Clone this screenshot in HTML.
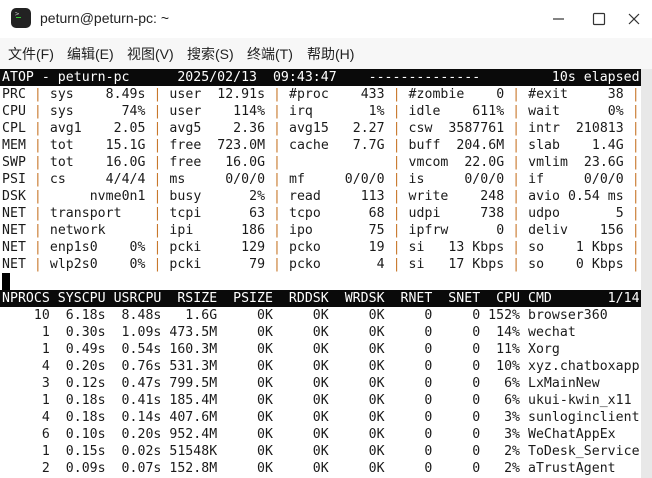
<!DOCTYPE html>
<html><head><meta charset="utf-8"><style>
html,body{margin:0;padding:0;width:652px;height:478px;overflow:hidden;background:#fff;}
.win{position:absolute;left:0;top:0;width:652px;height:478px;background:#fff;border-radius:8px 8px 0 0;overflow:hidden}
.title{position:absolute;left:0;top:0;width:652px;height:38px;background:#fff}
.icon{position:absolute;left:11px;top:8px;width:20px;height:20px;background:#222;border-radius:5px}
.icon:after{content:"";position:absolute;left:5px;top:9px;width:5px;height:1px;background:#3c3}
.icon:before{content:">";position:absolute;left:4px;top:2px;font:7px "DejaVu Sans Mono",monospace;color:#ccc}
.ttext{position:absolute;left:40px;top:10px;font:14px "Liberation Sans","Noto Sans CJK SC",sans-serif;color:#222}
.menu{position:absolute;left:0;top:38px;width:652px;height:31px;background:#f7f7f7;font:14px "Liberation Sans","Noto Sans CJK SC",sans-serif;color:#222}
.menu span{position:absolute;top:6px}
.term{position:absolute;left:0;top:69px;width:641px;height:409px;background:#fff}
.sb{position:absolute;left:641px;top:69px;width:11px;height:409px;background:#e8e8e8}
pre{position:absolute;left:2px;top:69px;margin:0;font:13.2px/17px "DejaVu Sans Mono",monospace;letter-spacing:0.03px;color:#1a1a1a;white-space:pre}
.b{position:absolute;left:0;width:641px;height:17px;background:#0a0a0a}
.i{color:#fff}
.o{color:#c8782c}
.cur{position:absolute;left:2px;top:273px;width:8px;height:17px;background:#000}
</style></head><body><div class="win">
<div class="title"><div class="icon"></div><div class="ttext">peturn@peturn-pc: ~</div>
<svg style="position:absolute;left:552px;top:12px" width="90" height="14"><line x1="1" y1="7" x2="12" y2="7" stroke="#333" stroke-width="1.2"/><rect x="41.5" y="1.5" width="11" height="11" fill="none" stroke="#333" stroke-width="1.2" rx="1"/><path d="M77 2L87 12M87 2L77 12" stroke="#333" stroke-width="1.2"/></svg></div>
<div class="menu"><span style="left:8px">文件(F)</span><span style="left:67px">编辑(E)</span><span style="left:127px">视图(V)</span><span style="left:187px">搜索(S)</span><span style="left:247px">终端(T)</span><span style="left:307px">帮助(H)</span></div>
<div class="term"></div><div class="sb"></div>
<div class="b" style="top:69px"></div><div class="b" style="top:290px"></div>
<div class="cur"></div>
<pre><span class="i">ATOP - peturn-pc      2025/02/13  09:43:47    --------------         10s elapsed</span>
PRC <span class="o">|</span> sys    8.49s <span class="o">|</span> user  12.91s <span class="o">|</span> #proc    433 <span class="o">|</span> #zombie    0 <span class="o">|</span> #exit     38 <span class="o">|</span>
CPU <span class="o">|</span> sys      74% <span class="o">|</span> user    114% <span class="o">|</span> irq       1% <span class="o">|</span> idle    611% <span class="o">|</span> wait      0% <span class="o">|</span>
CPL <span class="o">|</span> avg1    2.05 <span class="o">|</span> avg5    2.36 <span class="o">|</span> avg15   2.27 <span class="o">|</span> csw  3587761 <span class="o">|</span> intr  210813 <span class="o">|</span>
MEM <span class="o">|</span> tot    15.1G <span class="o">|</span> free  723.0M <span class="o">|</span> cache   7.7G <span class="o">|</span> buff  204.6M <span class="o">|</span> slab    1.4G <span class="o">|</span>
SWP <span class="o">|</span> tot    16.0G <span class="o">|</span> free   16.0G <span class="o">|</span>              <span class="o">|</span> vmcom  22.0G <span class="o">|</span> vmlim  23.6G <span class="o">|</span>
PSI <span class="o">|</span> cs     4/4/4 <span class="o">|</span> ms     0/0/0 <span class="o">|</span> mf     0/0/0 <span class="o">|</span> is     0/0/0 <span class="o">|</span> if     0/0/0 <span class="o">|</span>
DSK <span class="o">|</span>      nvme0n1 <span class="o">|</span> busy      2% <span class="o">|</span> read     113 <span class="o">|</span> write    248 <span class="o">|</span> avio 0.54 ms <span class="o">|</span>
NET <span class="o">|</span> transport    <span class="o">|</span> tcpi      63 <span class="o">|</span> tcpo      68 <span class="o">|</span> udpi     738 <span class="o">|</span> udpo       5 <span class="o">|</span>
NET <span class="o">|</span> network      <span class="o">|</span> ipi      186 <span class="o">|</span> ipo       75 <span class="o">|</span> ipfrw      0 <span class="o">|</span> deliv    156 <span class="o">|</span>
NET <span class="o">|</span> enp1s0    0% <span class="o">|</span> pcki     129 <span class="o">|</span> pcko      19 <span class="o">|</span> si   13 Kbps <span class="o">|</span> so    1 Kbps <span class="o">|</span>
NET <span class="o">|</span> wlp2s0    0% <span class="o">|</span> pcki      79 <span class="o">|</span> pcko       4 <span class="o">|</span> si   17 Kbps <span class="o">|</span> so    0 Kbps <span class="o">|</span>

<span class="i">NPROCS SYSCPU USRCPU  RSIZE  PSIZE  RDDSK  WRDSK  RNET  SNET  CPU CMD       1/14</span>
    10  6.18s  8.48s   1.6G     0K     0K     0K     0     0 152% browser360
     1  0.30s  1.09s 473.5M     0K     0K     0K     0     0  14% wechat
     1  0.49s  0.54s 160.3M     0K     0K     0K     0     0  11% Xorg
     4  0.20s  0.76s 531.3M     0K     0K     0K     0     0  10% xyz.chatboxapp
     3  0.12s  0.47s 799.5M     0K     0K     0K     0     0   6% LxMainNew
     1  0.18s  0.41s 185.4M     0K     0K     0K     0     0   6% ukui-kwin_x11
     4  0.18s  0.14s 407.6M     0K     0K     0K     0     0   3% sunloginclient
     6  0.10s  0.20s 952.4M     0K     0K     0K     0     0   3% WeChatAppEx
     1  0.15s  0.02s 51548K     0K     0K     0K     0     0   2% ToDesk_Service
     2  0.09s  0.07s 152.8M     0K     0K     0K     0     0   2% aTrustAgent</pre>
</div></body></html>
